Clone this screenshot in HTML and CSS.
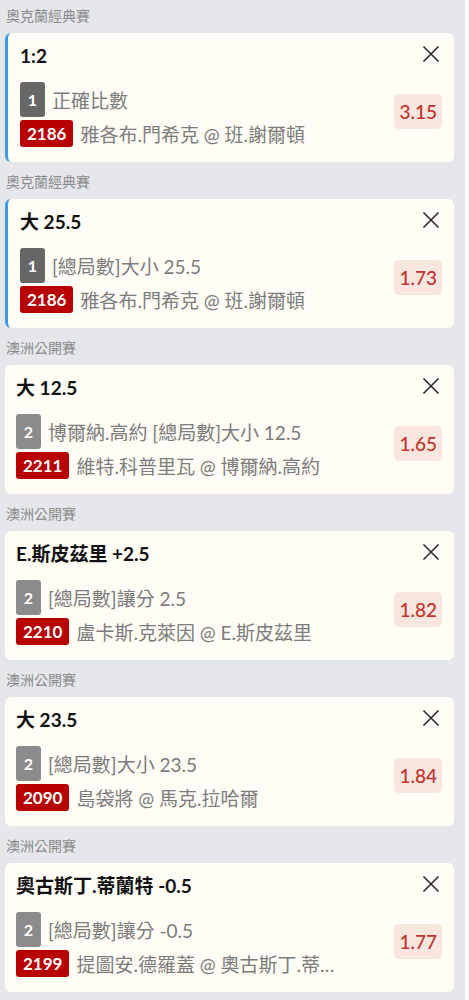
FILE: index.html
```html
<!DOCTYPE html>
<html lang="zh-Hant">
<head>
<meta charset="utf-8">
<title>投注單</title>
<link rel="stylesheet" href="styles.css">
</head>
<body>
<div class="slip">

  <section class="group">
    <div class="league">奧克蘭經典賽</div>
    <div class="card card--active">
      <div class="card-head">
        <div class="title">1:2</div>
        <button class="close" aria-label="移除"><svg viewBox="0 0 18 18" width="18" height="18"><path d="M1.5 1.5 L16.5 16.5 M16.5 1.5 L1.5 16.5" stroke="#2b2b2b" stroke-width="1.6" fill="none"/></svg></button>
      </div>
      <div class="card-body">
        <div class="rows">
          <div class="row row--market"><span class="num num--dark">1</span><span class="txt">正確比數</span></div>
          <div class="row row--event"><span class="code">2186</span><span class="txt">雅各布.門希克 @ 班.謝爾頓</span></div>
        </div>
        <div class="odds-col"><span class="odds">3.15</span></div>
      </div>
    </div>
  </section>

  <section class="group">
    <div class="league">奧克蘭經典賽</div>
    <div class="card card--active">
      <div class="card-head">
        <div class="title">大 25.5</div>
        <button class="close" aria-label="移除"><svg viewBox="0 0 18 18" width="18" height="18"><path d="M1.5 1.5 L16.5 16.5 M16.5 1.5 L1.5 16.5" stroke="#2b2b2b" stroke-width="1.6" fill="none"/></svg></button>
      </div>
      <div class="card-body">
        <div class="rows">
          <div class="row row--market"><span class="num num--dark">1</span><span class="txt">[總局數]大小 25.5</span></div>
          <div class="row row--event"><span class="code">2186</span><span class="txt">雅各布.門希克 @ 班.謝爾頓</span></div>
        </div>
        <div class="odds-col"><span class="odds">1.73</span></div>
      </div>
    </div>
  </section>

  <section class="group">
    <div class="league">澳洲公開賽</div>
    <div class="card">
      <div class="card-head">
        <div class="title">大 12.5</div>
        <button class="close" aria-label="移除"><svg viewBox="0 0 18 18" width="18" height="18"><path d="M1.5 1.5 L16.5 16.5 M16.5 1.5 L1.5 16.5" stroke="#2b2b2b" stroke-width="1.6" fill="none"/></svg></button>
      </div>
      <div class="card-body">
        <div class="rows">
          <div class="row row--market"><span class="num">2</span><span class="txt">博爾納.高約 [總局數]大小 12.5</span></div>
          <div class="row row--event"><span class="code">2211</span><span class="txt">維特.科普里瓦 @ 博爾納.高約</span></div>
        </div>
        <div class="odds-col"><span class="odds">1.65</span></div>
      </div>
    </div>
  </section>

  <section class="group">
    <div class="league">澳洲公開賽</div>
    <div class="card">
      <div class="card-head">
        <div class="title">E.斯皮茲里 +2.5</div>
        <button class="close" aria-label="移除"><svg viewBox="0 0 18 18" width="18" height="18"><path d="M1.5 1.5 L16.5 16.5 M16.5 1.5 L1.5 16.5" stroke="#2b2b2b" stroke-width="1.6" fill="none"/></svg></button>
      </div>
      <div class="card-body">
        <div class="rows">
          <div class="row row--market"><span class="num">2</span><span class="txt">[總局數]讓分 2.5</span></div>
          <div class="row row--event"><span class="code">2210</span><span class="txt">盧卡斯.克萊因 @ E.斯皮茲里</span></div>
        </div>
        <div class="odds-col"><span class="odds">1.82</span></div>
      </div>
    </div>
  </section>

  <section class="group">
    <div class="league">澳洲公開賽</div>
    <div class="card">
      <div class="card-head">
        <div class="title">大 23.5</div>
        <button class="close" aria-label="移除"><svg viewBox="0 0 18 18" width="18" height="18"><path d="M1.5 1.5 L16.5 16.5 M16.5 1.5 L1.5 16.5" stroke="#2b2b2b" stroke-width="1.6" fill="none"/></svg></button>
      </div>
      <div class="card-body">
        <div class="rows">
          <div class="row row--market"><span class="num">2</span><span class="txt">[總局數]大小 23.5</span></div>
          <div class="row row--event"><span class="code">2090</span><span class="txt">島袋將 @ 馬克.拉哈爾</span></div>
        </div>
        <div class="odds-col"><span class="odds">1.84</span></div>
      </div>
    </div>
  </section>

  <section class="group">
    <div class="league">澳洲公開賽</div>
    <div class="card">
      <div class="card-head">
        <div class="title">奧古斯丁.蒂蘭特 -0.5</div>
        <button class="close" aria-label="移除"><svg viewBox="0 0 18 18" width="18" height="18"><path d="M1.5 1.5 L16.5 16.5 M16.5 1.5 L1.5 16.5" stroke="#2b2b2b" stroke-width="1.6" fill="none"/></svg></button>
      </div>
      <div class="card-body">
        <div class="rows">
          <div class="row row--market"><span class="num">2</span><span class="txt">[總局數]讓分 -0.5</span></div>
          <div class="row row--event"><span class="code">2199</span><span class="txt">提圖安.德羅蓋 @ 奧古斯丁.蒂蘭特</span></div>
        </div>
        <div class="odds-col"><span class="odds">1.77</span></div>
      </div>
    </div>
  </section>

</div>
</body>
</html>
```

FILE: styles.css
```css
* { box-sizing: border-box; }

html, body {
  margin: 0;
  padding: 0;
  background: #fdfcf6;
}

body {
  font-family: Lato, "Noto Sans CJK TC", "Noto Sans", sans-serif;
  color: #111;
}

.slip {
  width: 465px;
  min-height: 1000px;
  background: #e6e7eb;
  padding: 0 11px 0 5px;
}

.group {
  padding-bottom: 4px;
}

.league {
  font-size: 14px;
  line-height: 18px;
  color: #8a8a8a;
  padding: 7px 1px 8px;
}

.card {
  background: #fffdf5;
  border-radius: 6px;
  height: 129px;
  padding: 10px 12px 15px 11px;
  display: flex;
  flex-direction: column;
}

.card--active {
  border-left: 3px solid #3d9be0;
  padding-left: 12px;
}

.card-head {
  display: flex;
  align-items: center;
  justify-content: space-between;
  height: 26px;
}

.title {
  font-size: 19px;
  font-weight: 700;
  line-height: 26px;
  color: #111;
}

.close {
  border: 0;
  background: none;
  padding: 0;
  margin: 0 2px 4px 0;
  width: 18px;
  height: 18px;
  display: flex;
}

.card-body {
  margin-top: 13px;
  display: flex;
  align-items: center;
}

.rows {
  flex: 1;
  min-width: 0;
  display: flex;
  flex-direction: column;
  gap: 3px;
}

.row {
  display: flex;
  align-items: center;
  gap: 7px;
  min-width: 0;
}

.txt {
  font-size: 19px;
  color: #7c7c7c;
  white-space: nowrap;
  overflow: hidden;
  text-overflow: ellipsis;
  min-width: 0;
}

.num {
  flex: none;
  width: 25px;
  height: 35px;
  border-radius: 3px;
  background: #8b8b8b;
  color: #fff;
  font-size: 16px;
  font-weight: 700;
  display: flex;
  align-items: center;
  justify-content: center;
}

.num--dark {
  background: #676767;
}

.code {
  flex: none;
  height: 27px;
  padding: 0 7px;
  border-radius: 3px;
  background: #b80000;
  color: #fff;
  font-size: 17px;
  font-weight: 700;
  display: flex;
  align-items: center;
}

.odds-col {
  flex: none;
  width: 92px;
  display: flex;
  justify-content: flex-end;
  margin-bottom: 7px;
}

.odds {
  height: 35px;
  min-width: 47px;
  padding: 0 5px;
  border-radius: 5px;
  background: #f8e6df;
  color: #c4302b;
  font-size: 19px;
  font-weight: 500;
  display: flex;
  align-items: center;
  justify-content: center;
}
```
